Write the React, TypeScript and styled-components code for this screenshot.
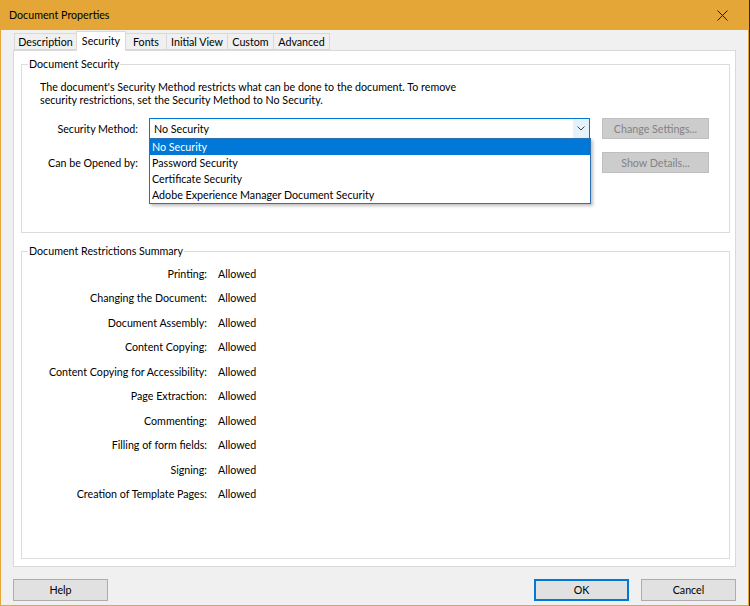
import React from "react";
import styled, { createGlobalStyle } from "styled-components";

const GlobalStyle = createGlobalStyle`
  html, body {
    margin: 0;
    padding: 0;
    background: #2f2f2f;
  }
  body {
    font-family: Lato, "Noto Sans", "Liberation Sans", sans-serif;
    font-size: 10.7px;
    color: #000;
  }
  * {
    box-sizing: border-box;
  }
`;

const Window = styled.div`
  width: 749px;
  height: 606px;
  border: 1px solid #e3a637;
  border-top: none;
  background: #f0f0f0;
  display: flex;
  flex-direction: column;
`;

const TitleBar = styled.div`
  height: 30px;
  margin: 0 -1px;
  background: #e3a637;
  display: flex;
  align-items: center;
  justify-content: space-between;
  padding: 0 21px 0 9px;
  flex-shrink: 0;
`;

const Title = styled.span`
  line-height: 14px;
`;

const Body = styled.div`
  padding: 3px 12px 0 12px;
  display: flex;
  flex-direction: column;
`;

const TabRow = styled.div`
  height: 17px;
  display: flex;
  align-items: flex-end;
  padding-left: 1px;
  position: relative;
  z-index: 2;
`;

const Tab = styled.div<{ $w: number; $active?: boolean }>`
  width: ${(p) => p.$w}px;
  height: ${(p) => (p.$active ? 20 : 17)}px;
  margin-bottom: ${(p) => (p.$active ? -1 : 0)}px;
  margin-right: -1px;
  padding-bottom: ${(p) => (p.$active ? 2 : 0)}px;
  background: ${(p) => (p.$active ? "#fff" : "#f0f0f0")};
  border: 1px solid #d9d9d9;
  border-bottom: ${(p) => (p.$active ? "none" : "1px solid #d9d9d9")};
  display: flex;
  align-items: center;
  justify-content: center;
  line-height: 14px;
  white-space: nowrap;
  position: relative;
  z-index: ${(p) => (p.$active ? 2 : 1)};
`;

const Panel = styled.div`
  height: 517px;
  background: #fff;
  border: 1px solid #d9d9d9;
  padding: 6px 5px 7px 7px;
  display: flex;
  flex-direction: column;
  gap: 11px;
`;

const Group = styled.fieldset<{ $h: number }>`
  margin: 0;
  padding: 0;
  min-width: 0;
  height: ${(p) => p.$h}px;
  border: 1px solid #dcdcdc;
`;

const Legend = styled.legend`
  margin-left: 6px;
  padding: 0 1px;
  line-height: 14px;
`;

const SecurityContent = styled.div`
  padding: 9px 0 0 18px;
`;

const Description = styled.p`
  margin: 0 0 12px;
  line-height: 13px;
`;

const FormRow = styled.div`
  display: flex;
  align-items: center;
  height: 21px;
  margin-bottom: 13px;
`;

const FieldLabel = styled.div`
  width: 109px;
  padding-right: 11px;
  text-align: right;
  white-space: nowrap;
`;

const SelectBox = styled.div`
  position: relative;
  width: 441px;
  height: 21px;
  border: 1px solid #0078d7;
  background: #fff;
  margin-right: 12px;
  display: flex;
  align-items: center;
`;

const EmptyField = styled.div`
  width: 441px;
  margin-right: 12px;
`;

const SelectValue = styled.span`
  flex: 1;
  padding-left: 4px;
  line-height: 14px;
`;

const ArrowCell = styled.div`
  width: 16px;
  height: 19px;
  background: #e5f1fb;
  display: flex;
  align-items: center;
  justify-content: center;
`;

const DropList = styled.ul`
  position: absolute;
  top: 19px;
  left: -1px;
  width: 442px;
  margin: 0;
  padding: 0;
  list-style: none;
  background: #fff;
  border: 1px solid #2f6fb3;
  box-shadow: 2px 2px 3px rgba(0, 0, 0, 0.25);
  z-index: 5;
`;

const DropItem = styled.li<{ $selected?: boolean }>`
  height: 16px;
  line-height: 16px;
  padding-left: 2px;
  white-space: nowrap;
  background: ${(p) => (p.$selected ? "#0078d7" : "#fff")};
  color: ${(p) => (p.$selected ? "#fff" : "#000")};
`;

const Button = styled.div<{ $w: number; $disabled?: boolean; $default?: boolean }>`
  width: ${(p) => p.$w}px;
  height: ${(p) => (p.$disabled ? 21 : 22)}px;
  display: flex;
  align-items: center;
  justify-content: center;
  background: ${(p) => (p.$disabled ? "#cccccc" : "#e1e1e1")};
  color: ${(p) => (p.$disabled ? "#838383" : "#000")};
  border: 1px solid
    ${(p) => (p.$default ? "#0078d7" : p.$disabled ? "#bfbfbf" : "#adadad")};
  box-shadow: ${(p) => (p.$default ? "inset 0 0 0 1px #0078d7" : "none")};
  line-height: 14px;
  white-space: nowrap;
`;

const Summary = styled.div`
  display: grid;
  grid-template-columns: 185px auto;
  grid-auto-rows: 24.5px;
  column-gap: 11px;
  align-items: center;
  padding-top: 3px;
`;

const SummaryLabel = styled.div`
  text-align: right;
  white-space: nowrap;
`;

const SummaryValue = styled.div`
  white-space: nowrap;
`;

const Footer = styled.div`
  display: flex;
  align-items: center;
  gap: 12px;
  margin-top: 12px;
  height: 22px;
`;

const Spacer = styled.div`
  flex: 1;
`;

const tabs = [
  { name: "Description", w: 63 },
  { name: "Security", w: 50, active: true },
  { name: "Fonts", w: 42 },
  { name: "Initial View", w: 62 },
  { name: "Custom", w: 47 },
  { name: "Advanced", w: 57 },
];

const restrictions = [
  "Printing:",
  "Changing the Document:",
  "Document Assembly:",
  "Content Copying:",
  "Content Copying for Accessibility:",
  "Page Extraction:",
  "Commenting:",
  "Filling of form fields:",
  "Signing:",
  "Creation of Template Pages:",
];

const methods = [
  "No Security",
  "Password Security",
  "Certificate Security",
  "Adobe Experience Manager Document Security",
];

const App = () => {
  return (
    <>
      <GlobalStyle />
      <Window>
        <TitleBar>
          <Title>Document Properties</Title>
          <svg width="11" height="11" viewBox="0 0 11 11">
            <path d="M0.5 0.5 L10.5 10.5 M10.5 0.5 L0.5 10.5" stroke="#1a1a1a" strokeWidth="1" />
          </svg>
        </TitleBar>
        <Body>
          <TabRow>
            {tabs.map((t) => (
              <Tab key={t.name} $w={t.w} $active={t.active}>
                {t.name}
              </Tab>
            ))}
          </TabRow>
          <Panel>
            <Group $h={176}>
              <Legend>Document Security</Legend>
              <SecurityContent>
                <Description>
                  The document's Security Method restricts what can be done to the document. To remove
                  <br />
                  security restrictions, set the Security Method to No Security.
                </Description>
                <FormRow>
                  <FieldLabel>Security Method:</FieldLabel>
                  <SelectBox>
                    <SelectValue>No Security</SelectValue>
                    <ArrowCell>
                      <svg width="8" height="5" viewBox="0 0 8 5">
                        <path d="M0.5 0.5 L4 4 L7.5 0.5" stroke="#444" strokeWidth="1" fill="none" />
                      </svg>
                    </ArrowCell>
                    <DropList>
                      {methods.map((m, i) => (
                        <DropItem key={m} $selected={i === 0}>
                          {m}
                        </DropItem>
                      ))}
                    </DropList>
                  </SelectBox>
                  <Button $w={107} $disabled>
                    Change Settings...
                  </Button>
                </FormRow>
                <FormRow>
                  <FieldLabel>Can be Opened by:</FieldLabel>
                  <EmptyField />
                  <Button $w={107} $disabled>
                    Show Details...
                  </Button>
                </FormRow>
              </SecurityContent>
            </Group>
            <Group $h={315}>
              <Legend>Document Restrictions Summary</Legend>
              <Summary>
                {restrictions.map((r) => (
                  <React.Fragment key={r}>
                    <SummaryLabel>{r}</SummaryLabel>
                    <SummaryValue>Allowed</SummaryValue>
                  </React.Fragment>
                ))}
              </Summary>
            </Group>
          </Panel>
          <Footer>
            <Button $w={95}>Help</Button>
            <Spacer />
            <Button $w={95} $default>
              OK
            </Button>
            <Button $w={95}>Cancel</Button>
          </Footer>
        </Body>
      </Window>
    </>
  );
};

export default App;
